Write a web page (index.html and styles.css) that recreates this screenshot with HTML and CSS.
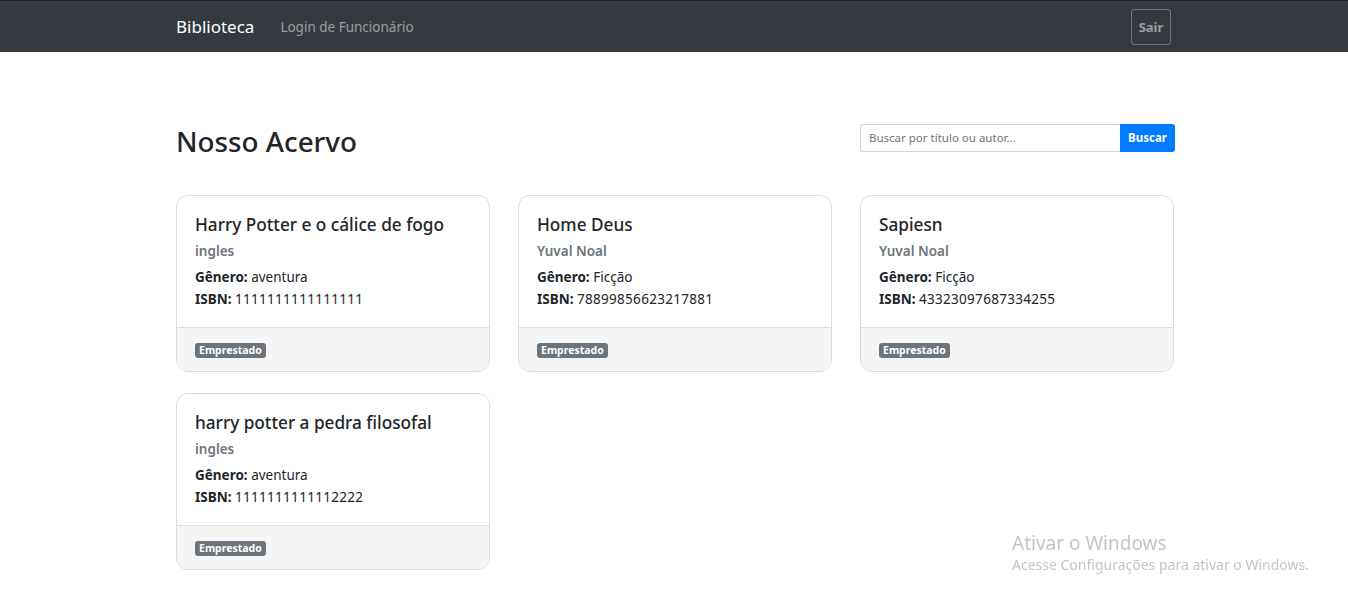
FILE: index.html
```html
<!DOCTYPE html>
<html lang="pt-BR">
<head>
<meta charset="utf-8">
<title>Biblioteca</title>
<link rel="stylesheet" href="styles.css">
</head>
<body>
<nav class="navbar">
  <div class="container nav-inner">
    <div class="nav-left">
      <a class="brand" href="#">Biblioteca</a>
      <a class="nav-link" href="#">Login de Funcionário</a>
    </div>
    <button class="btn-sair">Sair</button>
  </div>
</nav>

<main class="container main">
  <div class="header-row">
    <h2 class="page-title">Nosso Acervo</h2>
    <form class="search">
      <input class="search-input" type="text" placeholder="Buscar por título ou autor...">
      <button class="search-btn" type="button">Buscar</button>
    </form>
  </div>

  <div class="grid">
    <div class="card">
      <div class="card-body">
        <h5 class="card-title">Harry Potter e o cálice de fogo</h5>
        <h6 class="card-subtitle">ingles</h6>
        <p class="card-text"><strong>Gênero:</strong> aventura</p>
        <p class="card-text"><strong>ISBN:</strong> <span class="num">1111111111111111</span></p>
      </div>
      <div class="card-footer"><span class="badge">Emprestado</span></div>
    </div>
    <div class="card">
      <div class="card-body">
        <h5 class="card-title">Home Deus</h5>
        <h6 class="card-subtitle">Yuval Noal</h6>
        <p class="card-text"><strong>Gênero:</strong> Ficção</p>
        <p class="card-text"><strong>ISBN:</strong> <span class="num">78899856623217881</span></p>
      </div>
      <div class="card-footer"><span class="badge">Emprestado</span></div>
    </div>
    <div class="card">
      <div class="card-body">
        <h5 class="card-title">Sapiesn</h5>
        <h6 class="card-subtitle">Yuval Noal</h6>
        <p class="card-text"><strong>Gênero:</strong> Ficção</p>
        <p class="card-text"><strong>ISBN:</strong> <span class="num">43323097687334255</span></p>
      </div>
      <div class="card-footer"><span class="badge">Emprestado</span></div>
    </div>
    <div class="card">
      <div class="card-body">
        <h5 class="card-title">harry potter a pedra filosofal</h5>
        <h6 class="card-subtitle">ingles</h6>
        <p class="card-text"><strong>Gênero:</strong> aventura</p>
        <p class="card-text"><strong>ISBN:</strong> <span class="num">1111111111112222</span></p>
      </div>
      <div class="card-footer"><span class="badge">Emprestado</span></div>
    </div>
  </div>
</main>

<div class="watermark">
  <div class="wm-title">Ativar o Windows</div>
  <div class="wm-sub">Acesse Configurações para ativar o Windows.</div>
</div>
</body>
</html>
```

FILE: styles.css
```css
* { box-sizing: border-box; }
html, body { margin: 0; padding: 0; }
body {
  font-family: "Noto Sans", "Open Sans", sans-serif;
  color: #212529;
  background: #fff;
  font-size: 14px;
}
.container {
  width: 1000px;
  margin-left: calc(50% - 498px);
}
.navbar {
  background: #343a40;
  height: 52px;
  border-top: 1px solid #1d2124;
}
.nav-inner {
  height: 51px;
  display: flex;
  align-items: center;
  justify-content: space-between;
}
.nav-left {
  display: flex;
  align-items: center;
}
.brand {
  color: #fff;
  text-decoration: none;
  font-size: 17px;
  margin-right: 26px;
}
.nav-link {
  color: rgba(255,255,255,0.5);
  text-decoration: none;
  font-size: 13.5px;
}
.btn-sair {
  font-family: inherit;
  background: transparent;
  border: 1px solid rgba(255,255,255,0.3);
  color: rgba(255,255,255,0.5);
  font-weight: 700;
  font-size: 13px;
  border-radius: 3px;
  width: 40px;
  height: 36px;
  padding: 0;
  margin-right: 5px;
}
.main {
  padding-top: 70px;
}
.header-row {
  display: flex;
  justify-content: space-between;
  align-items: center;
  margin-bottom: 35px;
}
.page-title {
  margin: 0;
  font-size: 27.8px;
  font-weight: 500;
  line-height: 38px;
}
.search {
  display: flex;
  margin: 0 1px 7px 0;
}
.search-input {
  width: 260px;
  height: 28px;
  border: 1px solid #ced4da;
  border-right: none;
  border-radius: 3px 0 0 3px;
  padding: 0 8px;
  font-family: inherit;
  font-size: 11.5px;
  color: #495057;
}
.search-input::placeholder { color: #6c757d; }
.search-btn {
  height: 28px;
  width: 55px;
  border: none;
  background: #007bff;
  color: #fff;
  font-family: inherit;
  font-weight: 700;
  font-size: 11.5px;
  border-radius: 0 3px 3px 0;
  padding: 0;
}
.grid {
  display: grid;
  grid-template-columns: repeat(3, 314px);
  column-gap: 28px;
  row-gap: 21px;
  align-items: start;
}
.card {
  border: 1px solid #dcdcdc;
  border-radius: 12px;
  overflow: hidden;
  background: #fff;
}
.card-body {
  padding: 17px 18px 17px 18px;
}
.card-title {
  margin: 0 0 4px 0;
  font-size: 17.2px;
  font-weight: 500;
  line-height: 24px;
}
.card-subtitle {
  margin: 0 0 5px 0;
  font-size: 13.5px;
  font-weight: 600;
  color: #6c757d;
  line-height: 20px;
}
.card-text {
  margin: 0;
  font-size: 13.5px;
  line-height: 22px;
}
.card-text strong { font-weight: 700; }
.num { letter-spacing: 0.3px; }
.card-footer {
  height: 44px;
  border-top: 1px solid #dcdcdc;
  background: #f5f5f5;
  padding: 2px 18px 0 18px;
  display: flex;
  align-items: center;
}
.badge {
  display: inline-block;
  background: #6c757d;
  color: #fff;
  font-size: 10.5px;
  font-weight: 700;
  line-height: 15px;
  padding: 0 4px;
  border-radius: 3px;
}
.watermark {
  position: fixed;
  left: 1012px;
  top: 530px;
  color: #c4c4c4;
  font-family: "Noto Sans", sans-serif;
}
.wm-title { font-size: 19px; line-height: 26px; }
.wm-sub { font-size: 14px; line-height: 18px; }
```
